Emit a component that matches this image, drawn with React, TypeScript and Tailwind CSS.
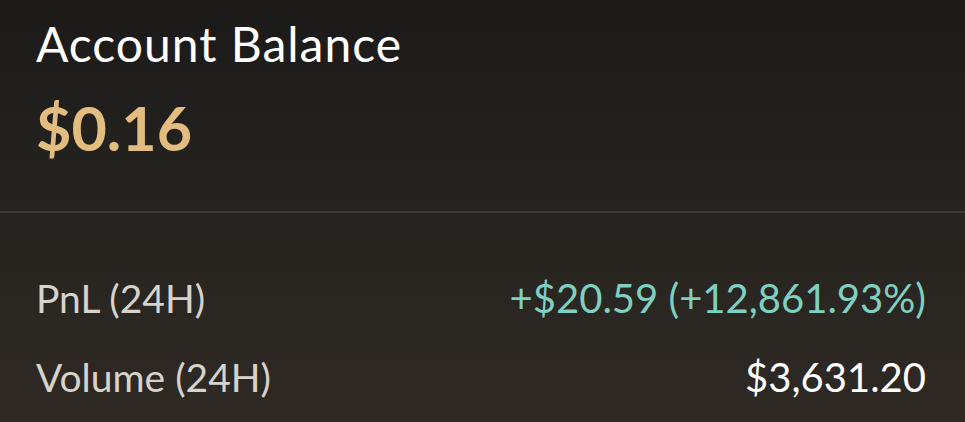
export default function App() {
  return (
    <div className="w-[965px] h-[422px] overflow-hidden bg-gradient-to-b from-[#1b1a19] via-[#262420] to-[#2f2924] font-['Lato',sans-serif]">
      <div className="px-9 pt-[14px] h-[211px]">
        <h1 className="text-[48px] leading-[60px] font-normal tracking-[1px] text-white">Account Balance</h1>
        <div className="mt-[19px] text-[61px] leading-[70px] font-bold text-[#e3bd80]">$0.16</div>
      </div>
      <div className="h-[2px] bg-[#3b3a37]" />
      <div className="pl-9 pr-[39px] pt-[60px] flex flex-col gap-[29px] text-[39px] leading-[50px]">
        <div className="flex justify-between">
          <span className="text-[#d6d2cc]">PnL (24H)</span>
          <span className="text-[#7fd0c0] text-[40px]">+$20.59 (+12,861.93%)</span>
        </div>
        <div className="flex justify-between">
          <span className="text-[#d6d2cc]">Volume (24H)</span>
          <span className="text-white text-[40px]">$3,631.20</span>
        </div>
      </div>
    </div>
  );
}
